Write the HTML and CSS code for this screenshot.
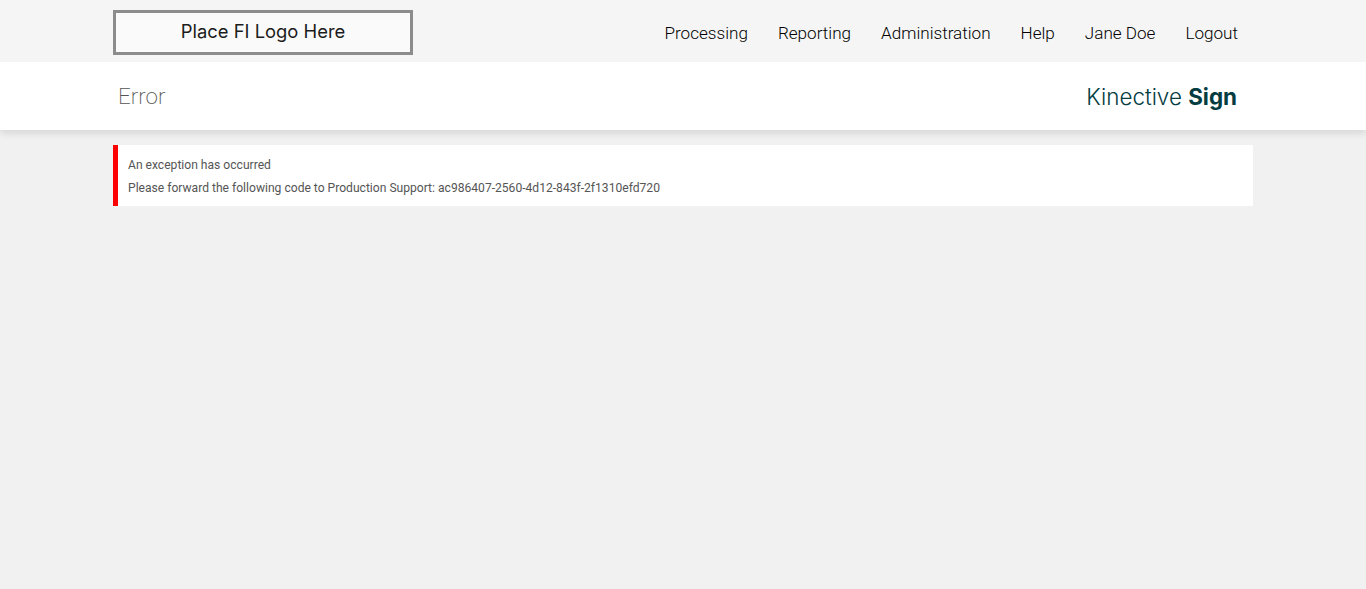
FILE: index.html
```html
<!DOCTYPE html>
<html lang="en">
<head>
<meta charset="utf-8">
<title>Error</title>
<link rel="stylesheet" href="styles.css">
</head>
<body>
<header class="topbar">
  <div class="container topbar-inner">
    <div class="logo">Place FI Logo Here</div>
    <nav class="nav">
      <a href="#">Processing</a>
      <a href="#">Reporting</a>
      <a href="#">Administration</a>
      <a href="#">Help</a>
      <a href="#">Jane Doe</a>
      <a href="#">Logout</a>
    </nav>
  </div>
</header>
<section class="pagehead">
  <div class="container pagehead-inner">
    <h1 class="title">Error</h1>
    <div class="brand">Kinective <b>Sign</b></div>
  </div>
</section>
<main class="container">
  <div class="alert">
    <p>An exception has occurred</p>
    <p>Please forward the following code to Production Support: ac986407-2560-4d12-843f-2f1310efd720</p>
  </div>
</main>
</body>
</html>
```
FILE: styles.css
```css
* { box-sizing: border-box; }
html, body { height: 100%; }
body {
  margin: 0;
  background: #f1f1f1;
  font-family: Roboto, "Liberation Sans", sans-serif;
  overflow: hidden;
}
.container { width: 1140px; margin: 0 auto; }
.topbar { background: #f5f5f5; height: 62px; position: relative; z-index: 1; }
.topbar-inner { display: flex; justify-content: space-between; align-items: flex-start; padding-top: 10px; }
.logo {
  width: 300px;
  height: 45px;
  border: 3px solid #8c8c8c;
  background: #fafafa;
  display: flex;
  align-items: center;
  justify-content: center;
  padding-bottom: 4px;
  font-family: Inter, sans-serif;
  font-size: 18.4px;
  font-weight: 400;
  color: #1c1c1c;
}
.nav { display: flex; gap: 30px; padding: 13px 15px 0 0; }
.nav a {
  font-size: 17.1px;
  font-weight: 300;
  line-height: 20px;
  color: #000;
  text-decoration: none;
}
.pagehead {
  background: #fff;
  height: 68px;
  box-shadow: 0 3px 8px rgba(0,0,0,.12);
  position: relative;
}
.pagehead-inner { display: flex; justify-content: space-between; align-items: center; height: 100%; padding: 0 16px 0 5px; }
.title { margin: 0; font-size: 22.4px; font-weight: 200; color: #555; font-family: Roboto, sans-serif; }
.brand { font-family: Inter, sans-serif; font-size: 22.4px; font-weight: 300; color: #043c42; }
.brand b { font-weight: 700; }
.alert {
  margin-top: 15px;
  height: 61px;
  background: #fff;
  border-left: 5px solid #f00;
  padding: 12px 10px 0;
  font-size: 12.1px;
  color: #555;
}
.alert p { margin: 0 0 6px; line-height: 17px; }
```
